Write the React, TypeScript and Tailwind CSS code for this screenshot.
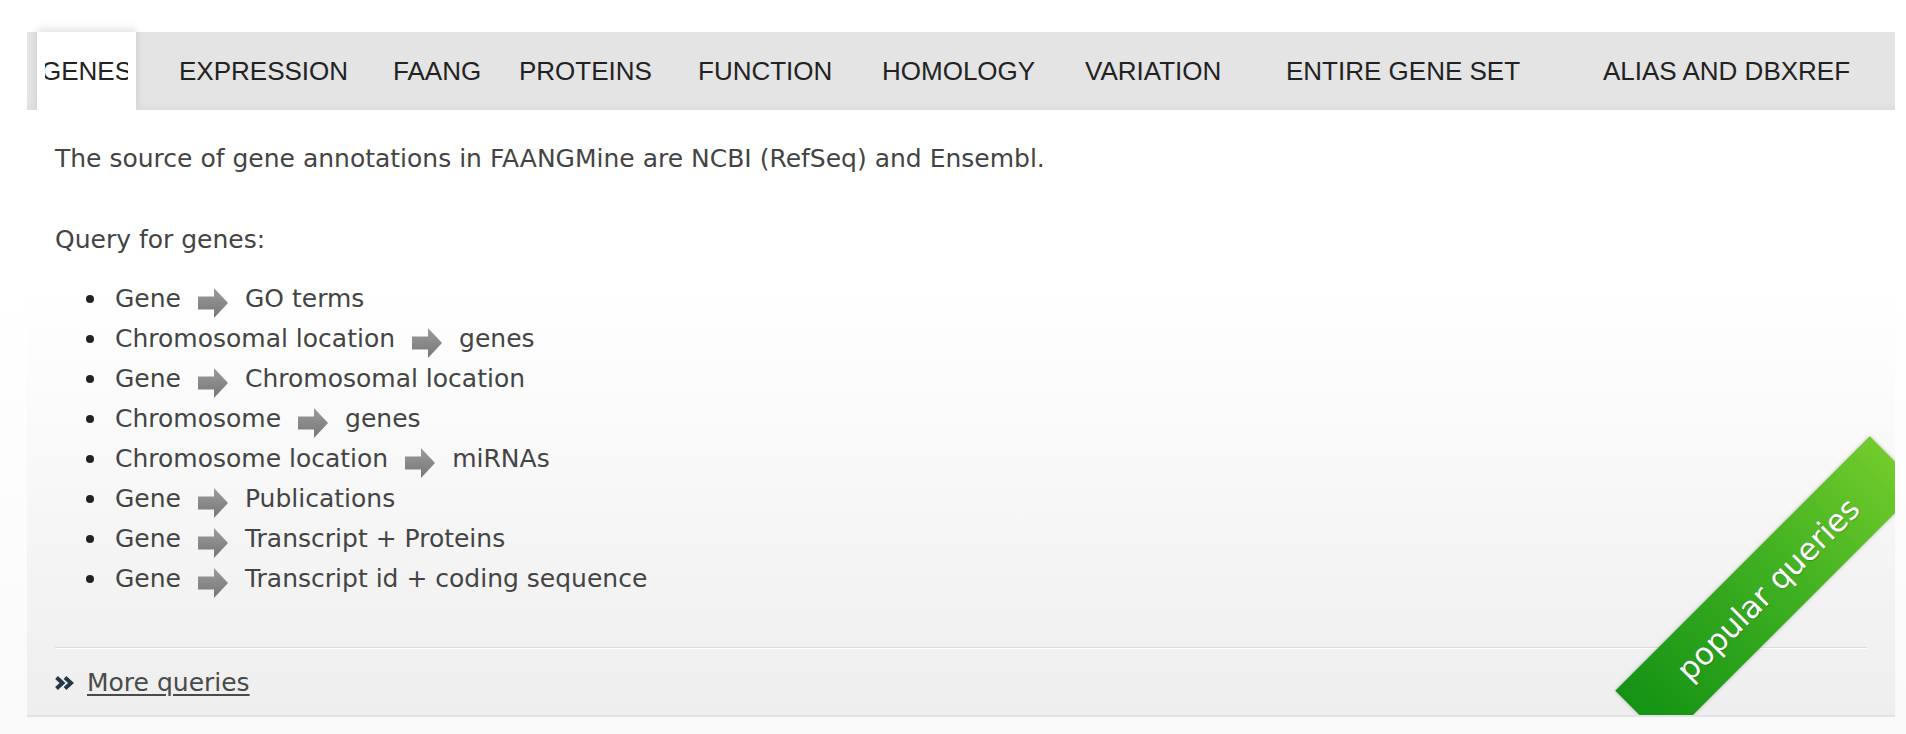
import type { ReactNode } from 'react';

const tabs = [
  { label: 'EXPRESSION', w: 'w-[214px]' },
  { label: 'FAANG', w: 'w-[126px]' },
  { label: 'PROTEINS', w: 'w-[179px]' },
  { label: 'FUNCTION', w: 'w-[184px]' },
  { label: 'HOMOLOGY', w: 'w-[203px]' },
  { label: 'VARIATION', w: 'w-[201px]' },
  { label: 'ENTIRE GENE SET', w: 'w-[317px]' },
  { label: 'ALIAS AND DBXREF', w: 'w-[250px]' },
];

const queries: [string, string][] = [
  ['Gene', 'GO terms'],
  ['Chromosomal location', 'genes'],
  ['Gene', 'Chromosomal location'],
  ['Chromosome', 'genes'],
  ['Chromosome location', 'miRNAs'],
  ['Gene', 'Publications'],
  ['Gene', 'Transcript + Proteins'],
  ['Gene', 'Transcript id + coding sequence'],
];

function Arrow() {
  return (
    <svg width="30" height="30" viewBox="0 0 30 30" className="mt-[8px] shrink-0">
      <defs>
        <linearGradient id="arrowFill" x1="0" y1="0" x2="0" y2="1">
          <stop offset="0" stopColor="#9c9c9c" />
          <stop offset="1" stopColor="#767676" />
        </linearGradient>
      </defs>
      <path d="M0 8.5 H16 V0 L30 15 L16 30 V21.5 H0 Z" fill="url(#arrowFill)" />
    </svg>
  );
}

function Bullet({ children }: { children: ReactNode }) {
  return (
    <li className="flex h-[40px] items-center">
      <span className="ml-[59px] mr-[21px] size-[8px] shrink-0 rounded-full bg-[#222]" />
      {children}
    </li>
  );
}

export default function App() {
  return (
    <div className="min-h-[734px] bg-[linear-gradient(to_bottom,#ffffff_40%,#f9f9f9)] pl-[27px] pr-[11px] pt-[32px] font-['DejaVu_Sans',sans-serif] text-[25px] text-[#444]">
      <div className="flex h-[78px] bg-[linear-gradient(to_bottom,#e4e4e4_90%,#dddddd)] pl-[10px] font-['Liberation_Sans',Arial,sans-serif] text-[26px] text-[#222]">
        <div className="flex w-[99px] items-center justify-center bg-white shadow-[0_-3px_8px_rgba(0,0,0,0.12)]">
          <div className="flex w-[83px] justify-center overflow-hidden">
            <span className="shrink-0">GENES</span>
          </div>
        </div>
        <div className="ml-[43px] flex">
          {tabs.map((t) => (
            <div key={t.label} className={`flex items-center ${t.w}`}>
              <span className="whitespace-nowrap">{t.label}</span>
            </div>
          ))}
        </div>
      </div>

      <div className="relative h-[607px] overflow-hidden border-b-2 border-[#e2e2e2] bg-[linear-gradient(to_bottom,#ffffff_30%,#eeeeee)]">
        <div className="pt-[29px] leading-[40px]">
          <p className="pl-[28px]">The source of gene annotations in FAANGMine are NCBI (RefSeq) and Ensembl.</p>
          <p className="mt-[41px] pl-[28px]">Query for genes:</p>
          <ul className="mt-[19px]">
            {queries.map(([from, to], i) => (
              <Bullet key={i}>
                <span className="whitespace-nowrap">{from}</span>
                <span className="mx-[17px] flex">
                  <Arrow />
                </span>
                <span className="whitespace-nowrap">{to}</span>
              </Bullet>
            ))}
          </ul>
          <div className="ml-[28px] mr-[28px] mt-[48px] h-[2px] border-t border-b border-t-[#dcdcdc] border-b-white" />
          <div className="mt-[14px] flex h-[40px] items-center pl-[28px]">
            <svg width="19" height="14" viewBox="0 0 19 14" className="mr-[13px] shrink-0">
              <path d="M1.5 1.5 L7.5 7 L1.5 12.5" fill="none" stroke="#23394a" strokeWidth="4" strokeLinejoin="miter" />
              <path d="M10 1.5 L16 7 L10 12.5" fill="none" stroke="#23394a" strokeWidth="4" strokeLinejoin="miter" />
            </svg>
            <a href="#" className="text-[#4a4a4a] underline underline-offset-[3px]">
              More queries
            </a>
          </div>
        </div>

        <div className="absolute bottom-[90px] right-[-53px] flex h-[72px] w-[360px] -rotate-45 items-center justify-center bg-[linear-gradient(to_right,#149214,#3fb021_55%,#72cb2c)] shadow-[0_0_4px_rgba(0,0,0,0.25)]">
          <span className="text-[31px] text-white [text-shadow:0_1px_1px_rgba(0,0,0,0.25)]">popular queries</span>
        </div>
      </div>
    </div>
  );
}
